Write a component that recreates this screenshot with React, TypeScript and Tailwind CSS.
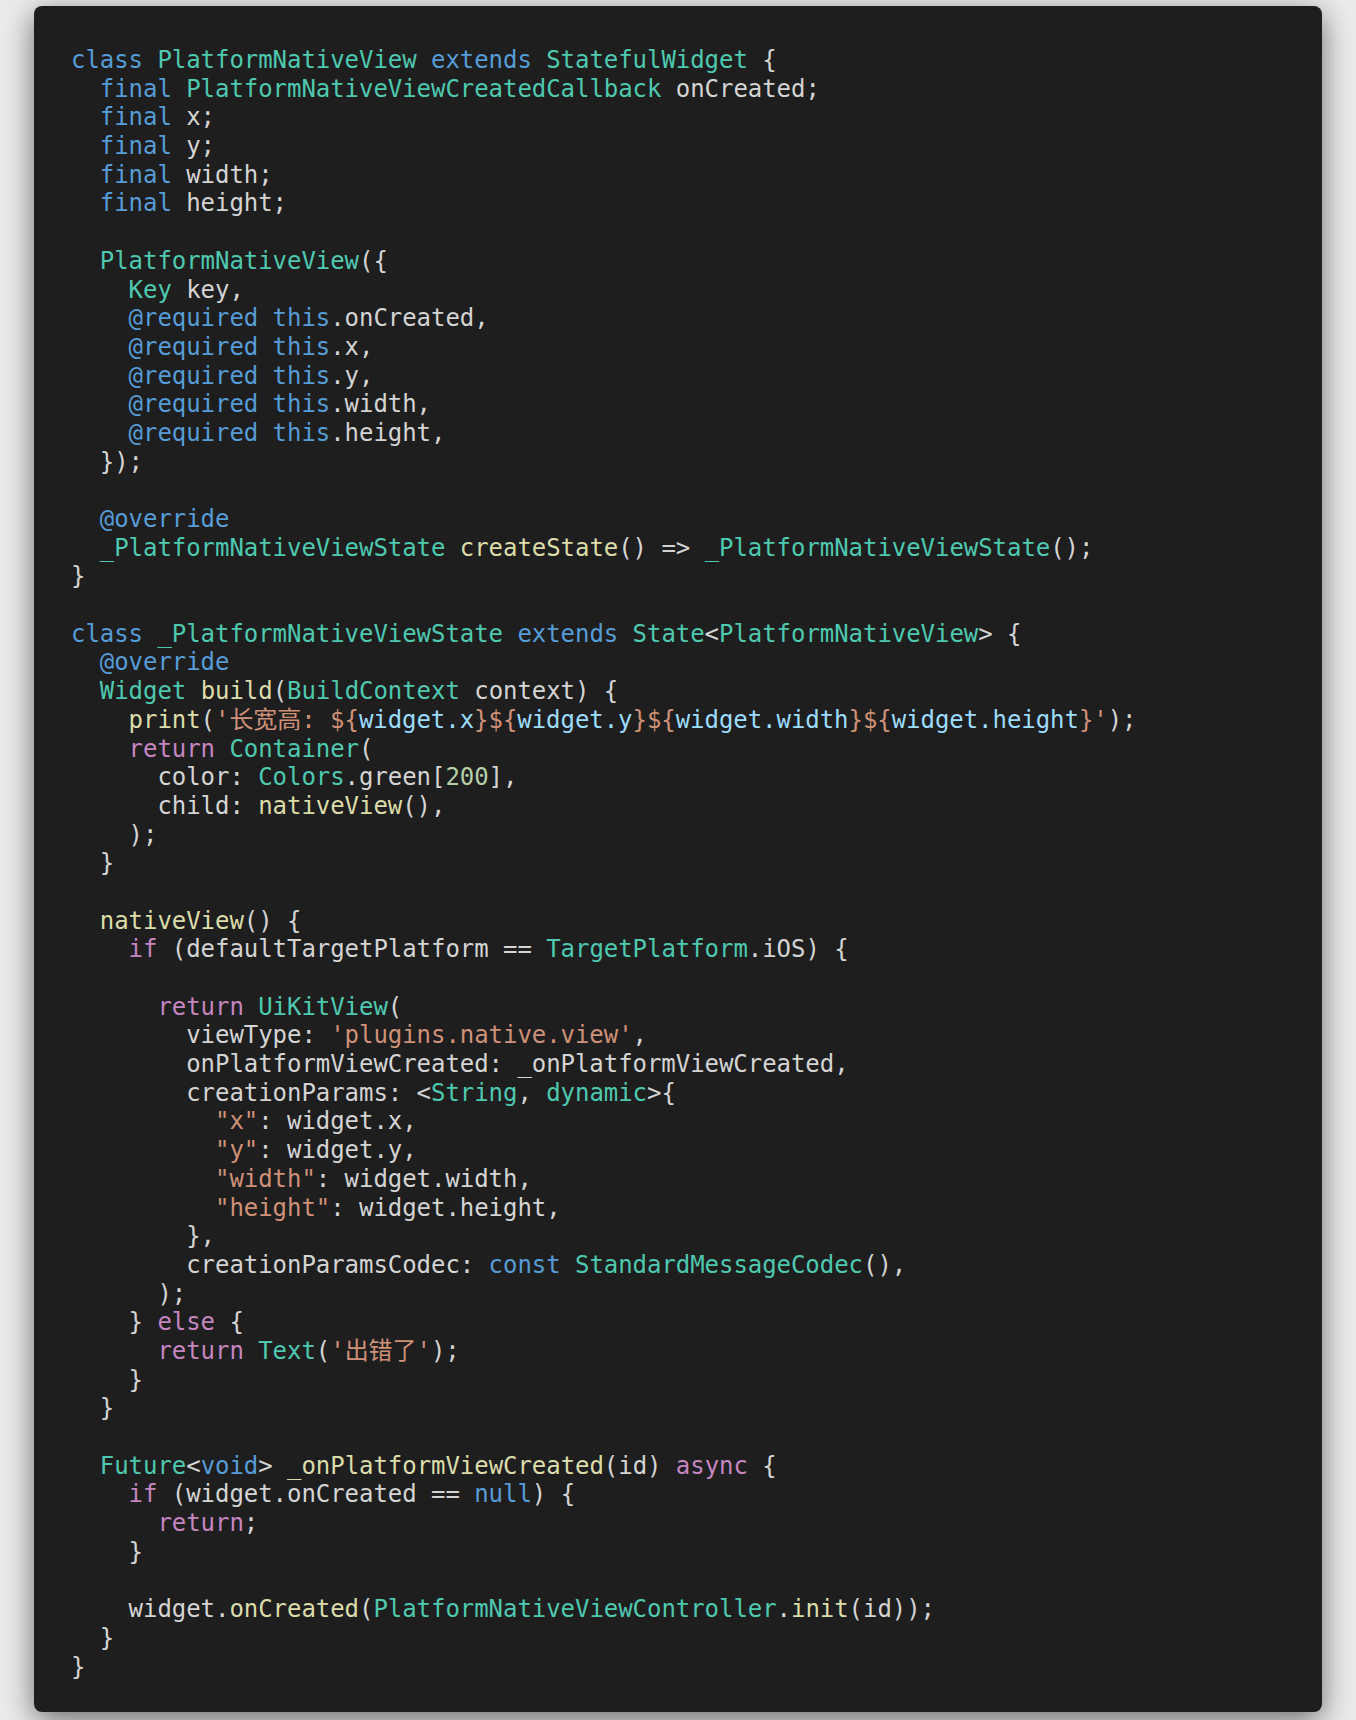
import React from 'react';

type Tok = string | [string, string];

// syntax colours (VS Code dark+)
const B = 'text-[#569cd6]';
const T = 'text-[#4ec9b0]';
const F = 'text-[#dcdcaa]';
const S = 'text-[#ce9178]';
const P = 'text-[#c586c0]';
const V = 'text-[#9cdcfe]';
const N = 'text-[#b5cea8]';

const lines: Tok[][] = [
  [[B, 'class'], ' ', [T, 'PlatformNativeView'], ' ', [B, 'extends'], ' ', [T, 'StatefulWidget'], ' {'],
  ['  ', [B, 'final'], ' ', [T, 'PlatformNativeViewCreatedCallback'], ' onCreated;'],
  ['  ', [B, 'final'], ' x;'],
  ['  ', [B, 'final'], ' y;'],
  ['  ', [B, 'final'], ' width;'],
  ['  ', [B, 'final'], ' height;'],
  [],
  ['  ', [T, 'PlatformNativeView'], '({'],
  ['    ', [T, 'Key'], ' key,'],
  ['    ', [B, '@required'], ' ', [B, 'this'], '.onCreated,'],
  ['    ', [B, '@required'], ' ', [B, 'this'], '.x,'],
  ['    ', [B, '@required'], ' ', [B, 'this'], '.y,'],
  ['    ', [B, '@required'], ' ', [B, 'this'], '.width,'],
  ['    ', [B, '@required'], ' ', [B, 'this'], '.height,'],
  ['  });'],
  [],
  ['  ', [B, '@override']],
  ['  ', [T, '_PlatformNativeViewState'], ' ', [F, 'createState'], '() => ', [T, '_PlatformNativeViewState'], '();'],
  ['}'],
  [],
  [[B, 'class'], ' ', [T, '_PlatformNativeViewState'], ' ', [B, 'extends'], ' ', [T, 'State'], '<', [T, 'PlatformNativeView'], '> {'],
  ['  ', [B, '@override']],
  ['  ', [T, 'Widget'], ' ', [F, 'build'], '(', [T, 'BuildContext'], ' context) {'],
  [
    '    ', [F, 'print'], '(', [S, "'长宽高: ${"], [V, 'widget.x'], [S, '}${'], [V, 'widget.y'], [S, '}${'],
    [V, 'widget.width'], [S, '}${'], [V, 'widget.height'], [S, "}'"], ');',
  ],
  ['    ', [P, 'return'], ' ', [T, 'Container'], '('],
  ['      color: ', [T, 'Colors'], '.green[', [N, '200'], '],'],
  ['      child: ', [F, 'nativeView'], '(),'],
  ['    );'],
  ['  }'],
  [],
  ['  ', [F, 'nativeView'], '() {'],
  ['    ', [P, 'if'], ' (defaultTargetPlatform == ', [T, 'TargetPlatform'], '.iOS) {'],
  [],
  ['      ', [P, 'return'], ' ', [T, 'UiKitView'], '('],
  ['        viewType: ', [S, "'plugins.native.view'"], ','],
  ['        onPlatformViewCreated: _onPlatformViewCreated,'],
  ['        creationParams: <', [T, 'String'], ', ', [T, 'dynamic'], '>{'],
  ['          ', [S, '"x"'], ': widget.x,'],
  ['          ', [S, '"y"'], ': widget.y,'],
  ['          ', [S, '"width"'], ': widget.width,'],
  ['          ', [S, '"height"'], ': widget.height,'],
  ['        },'],
  ['        creationParamsCodec: ', [B, 'const'], ' ', [T, 'StandardMessageCodec'], '(),'],
  ['      );'],
  ['    } ', [P, 'else'], ' {'],
  ['      ', [P, 'return'], ' ', [T, 'Text'], '(', [S, "'出错了'"], ');'],
  ['    }'],
  ['  }'],
  [],
  ['  ', [T, 'Future'], '<', [B, 'void'], '> ', [F, '_onPlatformViewCreated'], '(id) ', [P, 'async'], ' {'],
  ['    ', [P, 'if'], ' (widget.onCreated == ', [B, 'null'], ') {'],
  ['      ', [P, 'return'], ';'],
  ['    }'],
  [],
  ['    widget.', [F, 'onCreated'], '(', [T, 'PlatformNativeViewController'], '.', [F, 'init'], '(id));'],
  ['  }'],
  ['}'],
];

const CodeLine = ({ toks }: { toks: Tok[] }) => (
  <div className="h-[28.7px] whitespace-pre">
    {toks.map((t, i) =>
      typeof t === 'string' ? <span key={i}>{t}</span> : <span key={i} className={t[0]}>{t[1]}</span>
    )}
  </div>
);

export default function App() {
  return (
    <div className="w-[1356px] h-[1720px] overflow-hidden bg-[#ebebeb] pl-[34px] pt-[6px]">
      <div className="w-[1288px] rounded-lg bg-[#1e1e1e] pt-[40px] pb-[31px] pl-[37px] shadow-[0_8px_30px_rgba(0,0,0,0.55)]">
        <div
          className="text-[24px] leading-[28.7px] tracking-[-0.05px] text-[#d4d4d4]"
          style={{ fontFamily: '"DejaVu Sans Mono", "Noto Sans CJK SC", monospace' }}
        >
          {lines.map((l, i) => (
            <CodeLine key={i} toks={l} />
          ))}
        </div>
      </div>
    </div>
  );
}
